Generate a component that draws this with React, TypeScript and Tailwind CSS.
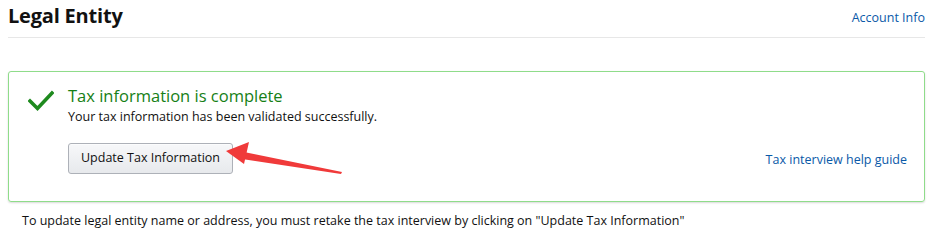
import React from 'react';

function CheckIcon() {
  return (
    <svg width="26" height="22" viewBox="0 0 26 22" className="shrink-0">
      <path d="M2 11 L9.5 18.5 L24 3" fill="none" stroke="#1e8a1e" strokeWidth="3.6" strokeLinecap="square" />
    </svg>
  );
}

function Arrow() {
  // red callout arrow pointing at the update button
  return (
    <svg width="130" height="40" viewBox="0 0 130 40" className="absolute left-[154px] top-[-1px] pointer-events-none">
      <path d="M22 10 L120 30 L119 32 L20 17 Z" fill="#f03a3a" />
      <path d="M4 9 L27 0 L22 22 Z" fill="#f03a3a" />
    </svg>
  );
}

export default function App() {
  return (
    <div className="w-[951px] h-[250px] bg-white font-['Open_Sans',sans-serif] text-[#111] relative">
      <div className="pl-2 pr-[26px]">
        <div className="flex items-start justify-between h-[38px] border-b border-[#e7e7e7]">
          <h1 className="text-[20px] leading-none font-bold mt-[6px] tracking-[-0.2px]">Legal Entity</h1>
          <a className="text-[12.5px] text-[#0a59a8] mt-[9px]">Account Info</a>
        </div>

        <div className="mt-[33px] h-[131px] border border-[#8fdc8a] rounded-[3px] shadow-[0_1px_2px_rgba(0,0,0,0.15)] flex">
          <div className="pl-[19px] pt-[18px]">
            <CheckIcon />
          </div>
          <div className="flex-1 pl-[14px] pt-[13px] pr-[17px]">
            <div className="text-[16.5px] leading-[22px] text-[#168016]">Tax information is complete</div>
            <div className="text-[12.5px] leading-[17px] mt-[1px]">Your tax information has been validated successfully.</div>
            <div className="flex items-end justify-between mt-[18px] relative">
              <button className="h-[31px] px-[12px] text-[12.5px] text-[#111] border border-[#adb1b8] rounded-[3px] bg-gradient-to-b from-[#f7f8fa] to-[#e7e9ec] shadow-[0_1px_0_rgba(255,255,255,0.6)_inset]">
                Update Tax Information
              </button>
              <Arrow />
              <a className="text-[12.5px] text-[#0a59a8] mb-[4px]">Tax interview help guide</a>
            </div>
          </div>
        </div>

        <p className="text-[12.5px] mt-[10px] pl-[14px]">
          To update legal entity name or address, you must retake the tax interview by clicking on "Update Tax Information"
        </p>
      </div>
    </div>
  );
}
